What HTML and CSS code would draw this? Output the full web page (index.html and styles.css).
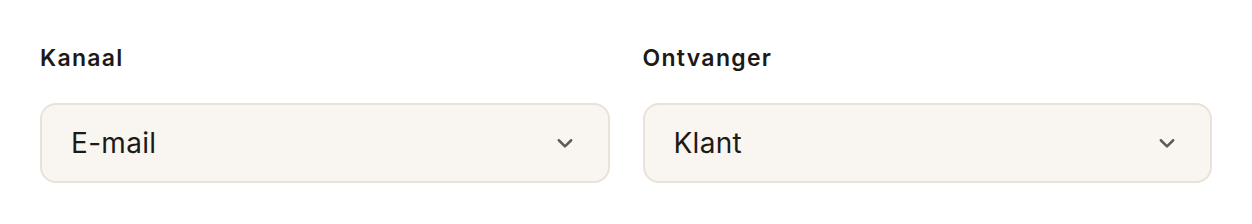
FILE: index.html
```html
<!DOCTYPE html>
<html lang="nl">

<head>
    <meta charset="UTF-8">
    <meta name="viewport" content="width=device-width, initial-scale=1.0">
    <title>Notificatie instellingen</title>
    <link rel="stylesheet" href="styles.css">
</head>

<body>
    <div class="form-row">
        <div class="field">
            <label class="field-label" for="kanaal">Kanaal</label>
            <div class="select-box" id="kanaal">
                <span class="select-value">E-mail</span>
                <svg class="chevron" viewBox="0 0 16 16" width="22" height="22">
                    <path d="M3.5 6l4.5 4.5L12.5 6" fill="none" stroke="currentColor" stroke-width="1.8" stroke-linecap="round" stroke-linejoin="round" />
                </svg>
            </div>
        </div>
        <div class="field">
            <label class="field-label" for="ontvanger">Ontvanger</label>
            <div class="select-box" id="ontvanger">
                <span class="select-value">Klant</span>
                <svg class="chevron" viewBox="0 0 16 16" width="22" height="22">
                    <path d="M3.5 6l4.5 4.5L12.5 6" fill="none" stroke="currentColor" stroke-width="1.8" stroke-linecap="round" stroke-linejoin="round" />
                </svg>
            </div>
        </div>
    </div>
</body>

</html>
```

FILE: styles.css
```css
* {
    margin: 0;
    padding: 0;
    box-sizing: border-box;
}

body {
    font-family: Inter, "Noto Sans", sans-serif;
    background-color: #ffffff;
    color: #1c1a17;
    padding: 43px 40px 0;
}

.form-row {
    display: grid;
    grid-template-columns: 1fr 1fr;
    gap: 33px;
}

.field {
    display: flex;
    flex-direction: column;
    gap: 30px;
}

.field-label {
    font-size: 23px;
    font-weight: 600;
    line-height: 30px;
    letter-spacing: 1.3px;
}

.select-box {
    display: flex;
    align-items: center;
    justify-content: space-between;
    height: 80px;
    padding: 0 32px 0 29px;
    background-color: #f9f6f1;
    border: 2px solid #e8e2d9;
    border-radius: 16px;
}

.select-value {
    font-size: 28px;
    font-weight: 400;
    letter-spacing: 0.3px;
}

.chevron {
    color: #5f5a55;
}
```
